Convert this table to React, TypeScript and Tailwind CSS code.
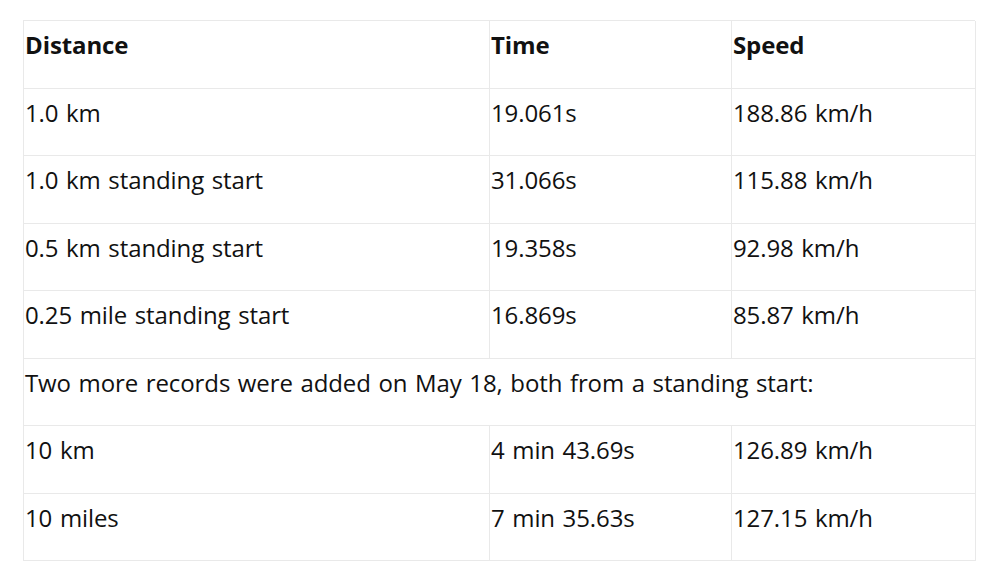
import React from "react";

const rows: [string, string, string][] = [
  ["1.0 km", "19.061s", "188.86 km/h"],
  ["1.0 km standing start", "31.066s", "115.88 km/h"],
  ["0.5 km standing start", "19.358s", "92.98 km/h"],
  ["0.25 mile standing start", "16.869s", "85.87 km/h"],
];
const rows2: [string, string, string][] = [
  ["10 km", "4 min 43.69s", "126.89 km/h"],
  ["10 miles", "7 min 35.63s", "127.15 km/h"],
];

const cell = "h-[67.5px] border-r border-b border-[#e9e9e9] pl-[1px] pt-[6px] leading-[36px] tracking-[-0.1px] [word-spacing:1.5px]";

function Row({ r, bold }: { r: [string, string, string]; bold?: boolean }) {
  return (
    <>
      {r.map((c, i) => (
        <div key={i} className={`${cell} ${bold ? "font-bold" : ""}`}>
          {c}
        </div>
      ))}
    </>
  );
}

export default function App() {
  return (
    <div className="w-[1000px] h-[580px] bg-white pt-[20px] pl-[23px]" style={{ fontFamily: "'Open Sans', Lato, sans-serif" }}>
      <div className="grid grid-cols-[466px_242px_244px] w-[952px] border-l border-t border-[#e9e9e9] text-[24px] text-[#111]">
        <Row r={["Distance", "Time", "Speed"]} bold />
        {rows.map((r, i) => (
          <Row key={i} r={r} />
        ))}
        <div className={`${cell} col-span-3`}>
          Two more records were added on May 18, both from a standing start:
        </div>
        {rows2.map((r, i) => (
          <Row key={i} r={r} />
        ))}
      </div>
    </div>
  );
}
